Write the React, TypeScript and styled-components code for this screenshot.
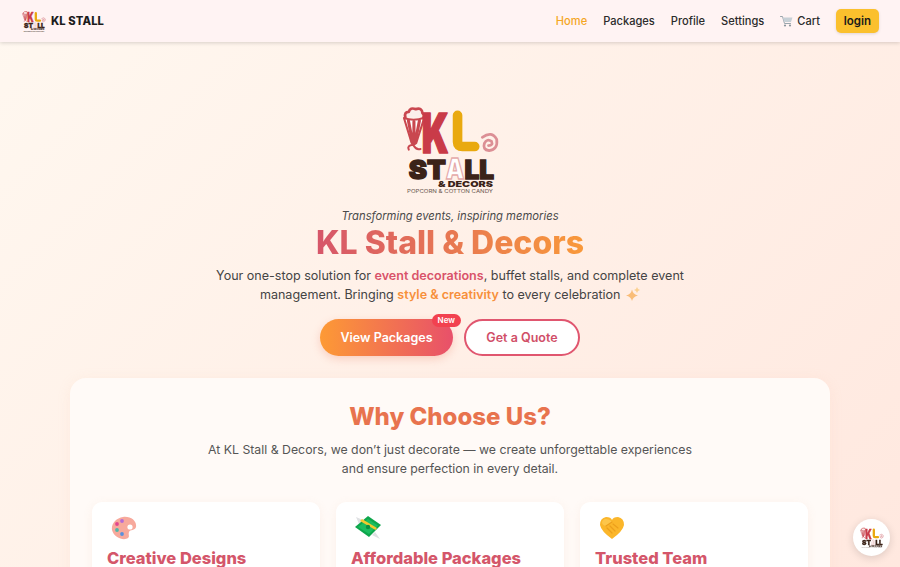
import React from 'react';
import styled, { createGlobalStyle } from 'styled-components';

const GlobalStyle = createGlobalStyle`
  html, body {
    margin: 0;
    padding: 0;
    height: 100%;
    overflow: hidden;
  }
  body {
    font-family: Inter, "Noto Sans", sans-serif;
    background: linear-gradient(135deg, #fff9f1 0%, #ffe9e0 100%);
    color: #333;
  }
  * { box-sizing: border-box; }
`;

const Page = styled.div`
  width: 900px;
  height: 567px;
  overflow: hidden;
  background: linear-gradient(135deg, #fff8f0 0%, #ffe8df 100%);
`;

const Navbar = styled.nav`
  height: 42px;
  display: flex;
  align-items: center;
  justify-content: space-between;
  padding: 0 21px 0 22px;
  background: #fff3f3;
  box-shadow: 0 1px 4px rgba(0, 0, 0, 0.16);
`;

const Brand = styled.a`
  display: flex;
  align-items: center;
  gap: 5px;
  font-size: 11.2px;
  font-weight: 800;
  letter-spacing: 0.1px;
  color: #1c1c1c;
`;

const NavLinks = styled.ul`
  display: flex;
  align-items: center;
  gap: 16px;
  list-style: none;
  margin: 0;
  padding: 0;
`;

const NavLink = styled.li<{ $active?: boolean }>`
  display: flex;
  align-items: center;
  gap: 4px;
  font-size: 11.1px;
  font-weight: 500;
  color: ${(p) => (p.$active ? '#f5a623' : '#2b2b2b')};
`;

const LoginButton = styled.button`
  height: 24px;
  width: 43px;
  padding: 0;
  border: none;
  border-radius: 5px;
  background: #fbc02d;
  color: #1a1a1a;
  font-family: inherit;
  font-size: 11.5px;
  font-weight: 600;
  box-shadow: 0 1px 3px rgba(0, 0, 0, 0.12);
`;

const Hero = styled.header`
  display: flex;
  flex-direction: column;
  align-items: center;
  padding-top: 63px;
`;

const Tagline = styled.p`
  margin: 14px 0 0;
  font-size: 11.25px;
  line-height: 14px;
  font-style: italic;
  color: #4a4a4a;
`;

const Title = styled.h1`
  margin: 2px 0 0;
  font-size: 32px;
  line-height: 36px;
  font-weight: 800;
  background: linear-gradient(90deg, #d6566a, #f9993a);
  -webkit-background-clip: text;
  background-clip: text;
  color: transparent;
`;

const Lead = styled.p`
  margin: 6px 0 0;
  width: 480px;
  text-align: center;
  font-size: 12.55px;
  line-height: 18.7px;
  color: #444;
`;

const Accent = styled.strong<{ $tone: 'rose' | 'orange' }>`
  font-weight: 600;
  color: ${(p) => (p.$tone === 'rose' ? '#d9536a' : '#f78f3a')};
`;

const Actions = styled.div`
  display: flex;
  gap: 11px;
  margin-top: 15px;
`;

const PrimaryButton = styled.button`
  position: relative;
  width: 133px;
  height: 37px;
  padding: 0;
  border: none;
  border-radius: 19px;
  background: linear-gradient(90deg, #fd9a35, #e8506a);
  color: #fff;
  font-family: inherit;
  font-size: 12.5px;
  font-weight: 600;
  box-shadow: 0 3px 8px rgba(232, 120, 90, 0.28);
`;

const Badge = styled.span`
  position: absolute;
  top: -5px;
  right: -8px;
  padding: 0 6px;
  height: 13px;
  line-height: 13px;
  border-radius: 7px;
  background: #f2414f;
  color: #fff;
  font-size: 8px;
  font-weight: 600;
`;

const SecondaryButton = styled.button`
  width: 116px;
  height: 37px;
  padding: 0;
  border: 2px solid #e0566f;
  border-radius: 19px;
  background: #fff;
  color: #d14f68;
  font-family: inherit;
  font-size: 12.5px;
  font-weight: 600;
`;

const WhySection = styled.section`
  width: 760px;
  margin: 22px auto 0;
  padding: 24px 22px 0;
  border-radius: 16px 16px 0 0;
  background: #fffaf7;
  box-shadow: 0 2px 14px rgba(240, 180, 150, 0.12);
  text-align: center;
`;

const WhyTitle = styled.h2`
  margin: 0;
  font-size: 24px;
  line-height: 29px;
  font-weight: 800;
  color: #e8734e;
`;

const WhyText = styled.p`
  margin: 10px auto 0;
  width: 500px;
  font-size: 12.3px;
  line-height: 18.2px;
  color: #555;
`;

const CardGrid = styled.div`
  display: grid;
  grid-template-columns: repeat(3, 228px);
  gap: 16px;
  margin-top: 24.4px;
`;

const Card = styled.article`
  height: 120px;
  padding: 14px 15px;
  border-radius: 10px;
  background: #fff;
  box-shadow: 0 2px 10px rgba(230, 170, 140, 0.12);
  text-align: left;
`;

const CardIcon = styled.div`
  height: 26px;
  padding-left: 4px;
`;

const CardTitle = styled.h3`
  margin: 6px 0 0;
  font-size: 16.5px;
  line-height: 20px;
  font-weight: 800;
  color: #d4566a;
`;

const FloatingButton = styled.button`
  position: fixed;
  right: 10px;
  bottom: 11px;
  width: 37px;
  height: 37px;
  padding: 0;
  display: flex;
  align-items: center;
  justify-content: center;
  border: none;
  border-radius: 50%;
  background: #fff;
  box-shadow: 0 2px 8px rgba(0, 0, 0, 0.14);
`;

function Logo({ width, height }: { width: number; height: number }) {
  return (
    <svg width={width} height={height} viewBox="65 30 290 262" role="img" aria-label="KL Stall and Decors logo">
      <g fill="none" stroke="#c9474f" strokeLinecap="round" strokeLinejoin="round">
        <path d="M80 66 Q76 50 90 50 Q94 36 110 42 Q128 36 130 54 Q138 60 132 68" strokeWidth="8" fill="#fbeeea" />
        <path d="M76 68 Q105 78 135 67 L112 140 Q106 148 98 140 Z" strokeWidth="6" fill="#fff" />
        <path d="M89 76 L101 138 M105 78 L105 140 M121 76 L109 138" strokeWidth="9" />
        <path d="M102 146 Q84 148 90 160 M104 148 Q112 162 124 158" strokeWidth="6" />
      </g>
      <text x="128" y="169" fontFamily="Inter, sans-serif" fontWeight="900" fontSize="160" fill="#c93b48" stroke="#c93b48" strokeWidth="5" strokeLinejoin="round" textLength="78" lengthAdjust="spacingAndGlyphs">K</text>
      <path d="M232 60 V138 Q232 151 246 151 H282" fill="none" stroke="#e9a90f" strokeWidth="28" strokeLinecap="round" />
      <path d="M304 124 Q332 104 346 130 Q350 160 324 163 Q304 160 310 142 Q318 126 331 136 Q336 148 322 148" fill="none" stroke="#dc8f95" strokeWidth="8" strokeLinecap="round" />
      <g fontFamily="Inter, sans-serif" fontWeight="900" fill="#3b2318">
        <text x="90" y="244" fontSize="76" stroke="#3b2318" strokeWidth="4" textLength="108" lengthAdjust="spacingAndGlyphs">ST</text>
        <text x="198" y="244" fontSize="82" fill="#fff" stroke="#e4a9a9" strokeWidth="4" textLength="54" lengthAdjust="spacingAndGlyphs">A</text>
        <text x="252" y="244" fontSize="76" stroke="#3b2318" strokeWidth="4" textLength="86" lengthAdjust="spacingAndGlyphs">LL</text>
        <text x="175" y="268" fontSize="24" textLength="160" lengthAdjust="spacingAndGlyphs">&amp; DECORS</text>
      </g>
      <text x="85" y="286" fontFamily="Inter, sans-serif" fontSize="15" fill="#6d5a52" textLength="250" lengthAdjust="spacingAndGlyphs">POPCORN &amp; COTTON CANDY</text>
    </svg>
  );
}

function CartIcon() {
  return (
    <svg width="13" height="12" viewBox="0 0 26 24">
      <path d="M1 3 H5 L9 17 H21" fill="none" stroke="#9aa5ad" strokeWidth="2" strokeLinecap="round" />
      <path d="M6 5 H25 L22 14 H8 Z" fill="#c7d0d6" />
      <circle cx="10" cy="21" r="2.2" fill="#8b959c" />
      <circle cx="20" cy="21" r="2.2" fill="#8b959c" />
    </svg>
  );
}

function SparkleIcon() {
  return (
    <svg width="14" height="14" viewBox="0 0 28 28" style={{ verticalAlign: '-2px', marginLeft: 2 }}>
      <path d="M12 5 Q14 15 24 17 Q14 19 12 28 Q10 19 0 17 Q10 15 12 5 Z" fill="#f9bd78" />
      <path d="M22 0 Q23 5 28 6 Q23 7 22 12 Q21 7 16 6 Q21 5 22 0 Z" fill="#fbd08f" />
    </svg>
  );
}

function PaletteIcon() {
  return (
    <svg width="26" height="24" viewBox="0 0 26 24">
      <path d="M12 1 C20 0 26 5 25 11 C24 15 19 13 18 16 C17 19 19 20 17 22 C13 25 3 22 1 14 C0 8 5 2 12 1 Z" fill="#f7a99c" />
      <circle cx="19" cy="11" r="2.6" fill="#fff" />
      <circle cx="11" cy="5" r="1.9" fill="#b56bd6" />
      <circle cx="6" cy="8" r="1.9" fill="#e2468f" />
      <circle cx="6" cy="14" r="1.9" fill="#4fb6a8" />
      <circle cx="11" cy="18" r="1.9" fill="#5a90dd" />
    </svg>
  );
}

function MoneyIcon() {
  return (
    <svg width="26" height="24" viewBox="0 0 26 24">
      <path d="M1 1 L8 4 L4 8 Z M20 16 L25 23 L17 19 Z" fill="#dfe1e3" />
      <path d="M0 11 L13 0 L26 9 L14 21 Z" fill="#0ea64c" />
      <path d="M3 11 L13 3 L23 9.5 L14 18 Z" fill="#1cbd5f" />
      <path d="M7 3 L22 12 L20.5 14 L5 5 Z" fill="#f2c92e" />
      <circle cx="13" cy="11" r="2.2" fill="#0c8f41" />
    </svg>
  );
}

function HandshakeIcon() {
  return (
    <svg width="26" height="24" viewBox="0 0 26 24">
      <path d="M7 1 Q12 1 13 4 Q14 1 19 1 Q25 2 25 9 Q24 15 13 23 Q2 15 1 9 Q1 2 7 1 Z" fill="#fbb62a" />
      <path d="M6 3 Q11 3 13 6 L8 10 Q4 10 3 7 Q3 4 6 3 Z" fill="#fdc64a" />
      <path d="M8 12 L13 17 M11 10 L16 15 M14 8 L19 12 M7 10 L13 6" fill="none" stroke="#ec9f1c" strokeWidth="1.2" strokeLinecap="round" />
    </svg>
  );
}

const reasons = [
  { title: 'Creative Designs', icon: <PaletteIcon /> },
  { title: 'Affordable Packages', icon: <MoneyIcon /> },
  { title: 'Trusted Team', icon: <HandshakeIcon /> },
];

export default function App() {
  return (
    <Page>
      <GlobalStyle />
      <Navbar>
        <Brand>
          <Logo width={24} height={23} />
          KL STALL
        </Brand>
        <NavLinks>
          <NavLink $active>Home</NavLink>
          <NavLink>Packages</NavLink>
          <NavLink>Profile</NavLink>
          <NavLink>Settings</NavLink>
          <NavLink>
            <CartIcon /> Cart
          </NavLink>
          <li>
            <LoginButton>login</LoginButton>
          </li>
        </NavLinks>
      </Navbar>
      <Hero>
        <Logo width={100} height={90} />
        <Tagline>Transforming events, inspiring memories</Tagline>
        <Title>KL Stall &amp; Decors</Title>
        <Lead>
          Your one-stop solution for <Accent $tone="rose">event decorations</Accent>, buffet stalls, and complete event
          management. Bringing <Accent $tone="orange">style &amp; creativity</Accent> to every celebration <SparkleIcon />
        </Lead>
        <Actions>
          <PrimaryButton>
            View Packages
            <Badge>New</Badge>
          </PrimaryButton>
          <SecondaryButton>Get a Quote</SecondaryButton>
        </Actions>
      </Hero>
      <WhySection>
        <WhyTitle>Why Choose Us?</WhyTitle>
        <WhyText>
          At KL Stall &amp; Decors, we don’t just decorate — we create unforgettable experiences and ensure perfection in
          every detail.
        </WhyText>
        <CardGrid>
          {reasons.map((r) => (
            <Card key={r.title}>
              <CardIcon>{r.icon}</CardIcon>
              <CardTitle>{r.title}</CardTitle>
            </Card>
          ))}
        </CardGrid>
      </WhySection>
      <FloatingButton aria-label="KL Stall">
        <Logo width={24} height={22} />
      </FloatingButton>
    </Page>
  );
}
